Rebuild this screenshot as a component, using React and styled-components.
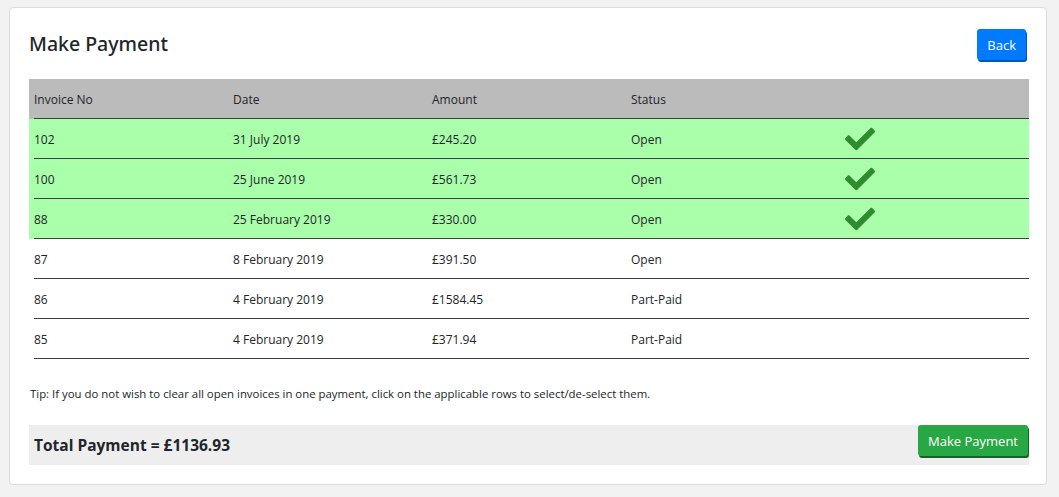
import React, { useState } from "react";
import styled, { createGlobalStyle } from "styled-components";
import { FaCheck } from "react-icons/fa";

const GlobalStyle = createGlobalStyle`
  html, body {
    margin: 0;
    background: #f2f2f2;
    font-family: "Open Sans", "Noto Sans", sans-serif;
    color: #212529;
  }
`;

const Page = styled.div`
  padding: 7px 0 0 9px;
`;

const Card = styled.div`
  box-sizing: border-box;
  width: 1038px;
  height: 478px;
  background: #fff;
  border: 1px solid #dcdcdc;
  border-radius: 4px;
  padding: 20px 17px 0 19px;
`;

const TopBar = styled.div`
  display: flex;
  justify-content: space-between;
  align-items: center;
  height: 33px;
  margin-bottom: 18px;
`;

const Title = styled.h2`
  margin: 0 0 2px 0;
  font-family: "Noto Sans", "Open Sans", sans-serif;
  font-size: 19.5px;
  font-weight: 500;
  color: #212529;
`;

const Button = styled.button`
  border: none;
  border-radius: 3px;
  color: #fff;
  font-family: inherit;
  font-size: 13px;
  cursor: pointer;
  background: ${p => (p.variant === "green" ? "#28a745" : "#007bff")};
  box-shadow: 1px 2px 0 ${p => (p.variant === "green" ? "#19602a" : "#0056b3")};
  height: 31px;
  padding: 0 ${p => (p.variant === "green" ? "10px" : "10px")};
  margin-right: ${p => (p.variant === "green" ? "1px" : "3px")};
`;

const Table = styled.div`
  width: 1000px;
`;

const Row = styled.div`
  background: ${p => (p.head ? "#bbbbbb" : p.selected ? "#aaffaa" : "transparent")};
  padding-left: 5px;
  cursor: ${p => (p.head ? "default" : "pointer")};
`;

const RowInner = styled.div`
  display: grid;
  grid-template-columns: repeat(5, 199px);
  height: 39px;
  align-items: center;
  border-bottom: 1px solid #3f3f3f;
  font-size: 12px;
`;

const Cell = styled.div`
  padding-top: 2px;
`;

const CheckCell = styled.div`
  display: flex;
  padding-left: 15px;
  color: #2e8b2e;
  font-size: 30px;
`;

const Tip = styled.p`
  margin: 27px 0 23px 1px;
  font-size: 11.4px;
  line-height: 16px;
`;

const TotalBar = styled.div`
  width: 1000px;
  height: 40px;
  background: #eeeeee;
  display: flex;
  align-items: flex-start;
  justify-content: space-between;
`;

const Total = styled.div`
  font-weight: 700;
  font-size: 15.5px;
  padding-left: 5px;
  line-height: 40px;
`;

const invoices = [
  { no: "102", date: "31 July 2019", amount: "£245.20", status: "Open" },
  { no: "100", date: "25 June 2019", amount: "£561.73", status: "Open" },
  { no: "88", date: "25 February 2019", amount: "£330.00", status: "Open" },
  { no: "87", date: "8 February 2019", amount: "£391.50", status: "Open" },
  { no: "86", date: "4 February 2019", amount: "£1584.45", status: "Part-Paid" },
  { no: "85", date: "4 February 2019", amount: "£371.94", status: "Part-Paid" }
];

export default function App() {
  const [selected, setSelected] = useState([0, 1, 2]);

  const toggle = i =>
    setSelected(s => (s.includes(i) ? s.filter(x => x !== i) : [...s, i]));

  return (
    <Page>
      <GlobalStyle />
      <Card>
        <TopBar>
          <Title>Make Payment</Title>
          <Button>Back</Button>
        </TopBar>
        <Table>
          <Row head>
            <RowInner>
              <Cell>Invoice No</Cell>
              <Cell>Date</Cell>
              <Cell>Amount</Cell>
              <Cell>Status</Cell>
              <Cell />
            </RowInner>
          </Row>
          {invoices.map((inv, i) => (
            <Row key={inv.no} selected={selected.includes(i)} onClick={() => toggle(i)}>
              <RowInner>
                <Cell>{inv.no}</Cell>
                <Cell>{inv.date}</Cell>
                <Cell>{inv.amount}</Cell>
                <Cell>{inv.status}</Cell>
                <CheckCell>{selected.includes(i) && <FaCheck />}</CheckCell>
              </RowInner>
            </Row>
          ))}
        </Table>
        <Tip>
          Tip: If you do not wish to clear all open invoices in one payment, click on the
          applicable rows to select/de-select them.
        </Tip>
        <TotalBar>
          <Total>Total Payment = £1136.93</Total>
          <Button variant="green">Make Payment</Button>
        </TotalBar>
      </Card>
    </Page>
  );
}
